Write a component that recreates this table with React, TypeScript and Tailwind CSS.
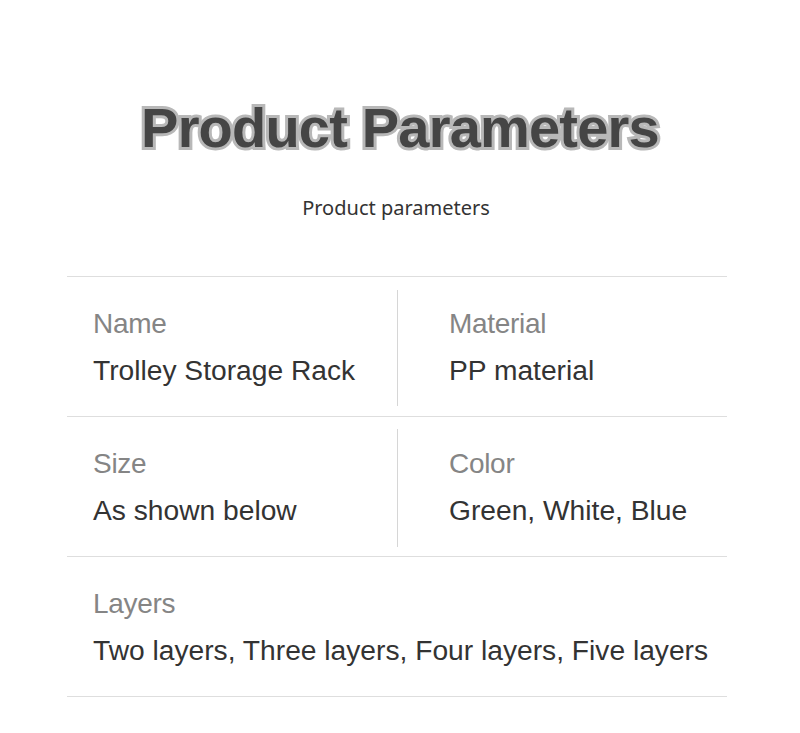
const rows = [
	[
		{label: "Name", value: "Trolley Storage Rack"},
		{label: "Material", value: "PP material"},
	],
	[
		{label: "Size", value: "As shown below"},
		{label: "Color", value: "Green, White, Blue"},
	],
];

function Cell({label, value, right}: {label: string; value: string; right?: boolean}) {
	return (
		<div className={right ? "pl-[51px]" : "pl-[26px]"}>
			<div className="text-[28px] leading-[32px] tracking-[-0.3px] text-[#858585]">{label}</div>
			<div className="mt-[14px] text-[28.2px] leading-[32px] text-[#333]">{value}</div>
		</div>
	);
}

export default function App() {
	return (
		<div className="w-[800px] h-[733px] bg-white font-['Liberation_Sans',Arial,sans-serif]">
			<div className="pt-[90px] text-center">
				<h1 className="text-[56px] leading-[76px] font-bold tracking-[-0.8px] text-[#454545] [-webkit-text-stroke:6px_#b8b8b8] [paint-order:stroke_fill]">
					Product Parameters
				</h1>
				<p className="mt-[29px] pr-[8px] text-[20px] leading-[26px] text-[#333] font-['Noto_Sans',sans-serif]">
					Product parameters
				</p>
			</div>

			<div className="ml-[67px] w-[660px] mt-[55px] border-t border-[#dedede]">
				{rows.map((row, i) => (
					<div key={i} className="flex h-[140px] items-stretch border-b border-[#dedede]">
						<div className="w-[330px] flex items-center">
							<Cell label={row[0].label} value={row[0].value} />
						</div>
						<div className={`w-px bg-[#d6d6d6] ${i === 0 ? "mt-[13px] mb-[10px]" : "mt-[12px] mb-[9px]"}`} />
						<div className="flex-1 flex items-center">
							<Cell label={row[1].label} value={row[1].value} right />
						</div>
					</div>
				))}
				<div className="flex h-[140px] items-center border-b border-[#dedede]">
					<Cell label="Layers" value="Two layers, Three layers, Four layers, Five layers" />
				</div>
			</div>
		</div>
	);
}
